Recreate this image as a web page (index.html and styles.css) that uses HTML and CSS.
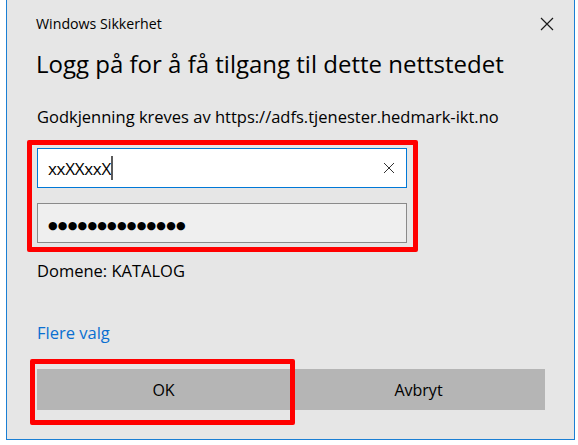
FILE: index.html
```html
<!DOCTYPE html>
<html>
<head>
    <meta charset="utf-8">
    <link rel="stylesheet" href="styles.css">
</head>
<body>
    <div class="dialog">
        <div class="titlebar">
            <span class="app-name">Windows Sikkerhet</span>
            <svg class="close" width="14" height="14" viewBox="0 0 14 14">
                <path d="M1 1 L13 13 M13 1 L1 13" stroke="#1a1a1a" stroke-width="1.2" fill="none"/>
            </svg>
        </div>

        <h1 class="heading">Logg på for å få tilgang til dette nettstedet</h1>
        <p class="origin">Godkjenning kreves av https://adfs.tjenester.hedmark-ikt.no</p>

        <div class="fields marked">
            <div class="field user">
                <span class="value">xxXXxxX</span><span class="caret"></span>
                <svg class="clear" width="12" height="12" viewBox="0 0 12 12">
                    <path d="M1 1 L11 11 M11 1 L1 11" stroke="#333" stroke-width="1" fill="none"/>
                </svg>
            </div>
            <div class="field pass">
                <span class="dots">●●●●●●●●●●●●●●</span>
            </div>
        </div>

        <p class="domain">Domene: KATALOG</p>
        <a class="more" href="#">Flere valg</a>

        <div class="buttons">
            <button type="button" class="btn marked">OK</button>
            <button type="button" class="btn">Avbryt</button>
        </div>
    </div>
</body>
</html>
```

FILE: styles.css
```css
body {
    margin: 0;
    background-color: white;
    font-family: 'Open Sans', 'Noto Sans', sans-serif;
    color: black;
}

.dialog {
    box-sizing: border-box;
    height: 440px;
    margin: 0 3px 0 6px;
    padding: 0 29px 0 30px;
    background-color: #e6e6e6;
    border: 1px solid #1a7fd4;
    border-top: none;
}

.titlebar {
    height: 46px;
    display: flex;
    align-items: center;
    justify-content: space-between;
}

.app-name {
    font-size: 14.2px;
    margin-left: -1px;
}

.close {
    margin-right: -9px;
    margin-top: 2px;
}

.heading {
    margin: 0;
    font-size: 24px;
    font-weight: normal;
    line-height: 36px;
    margin-left: -1px;
}

.origin {
    margin: 24px 0 0 0;
    font-size: 16.5px;
    line-height: 22px;
}

/* red annotation boxes drawn over the screenshot */
.marked {
    position: relative;
}

.marked::after {
    content: '';
    position: absolute;
    border: 5px solid #ff0000;
    border-radius: 2px;
    pointer-events: none;
}

.fields {
    width: 370px;
    margin-top: 20px;
    display: flex;
    flex-direction: column;
    gap: 15px;
}

.fields::after {
    left: -10px;
    top: -8px;
    right: -11px;
    bottom: -9px;
}

.field {
    box-sizing: border-box;
    height: 40px;
    display: flex;
    align-items: center;
    padding: 0 10px;
}

.user {
    background-color: white;
    border: 1px solid #0078d7;
}

.value {
    font-size: 17px;
    letter-spacing: -0.3px;
}

.caret {
    width: 2px;
    height: 24px;
    background-color: #5a5a5a;
}

.clear {
    margin-left: auto;
    margin-right: 1px;
}

.pass {
    background-color: #efefef;
    border: 1px solid #8a8a8a;
}

.dots {
    font-family: 'DejaVu Sans', sans-serif;
    font-size: 11px;
    letter-spacing: 0.25px;
    padding-top: 4px;
}

.domain {
    margin: 17px 0 0 0;
    font-size: 16.5px;
    line-height: 22px;
}

.more {
    display: block;
    margin-top: 40px;
    font-size: 16.5px;
    line-height: 22px;
    color: #0a6fd1;
    text-decoration: none;
}

.buttons {
    display: flex;
    gap: 2px;
    margin-top: 25px;
}

.btn {
    flex: 1;
    height: 41px;
    border: none;
    background-color: #b5b5b5;
    font-family: 'Open Sans', 'Noto Sans', sans-serif;
    font-size: 16px;
    color: black;
}

.btn.marked::after {
    left: -7px;
    top: -10px;
    right: -5px;
    bottom: -15px;
}
```
